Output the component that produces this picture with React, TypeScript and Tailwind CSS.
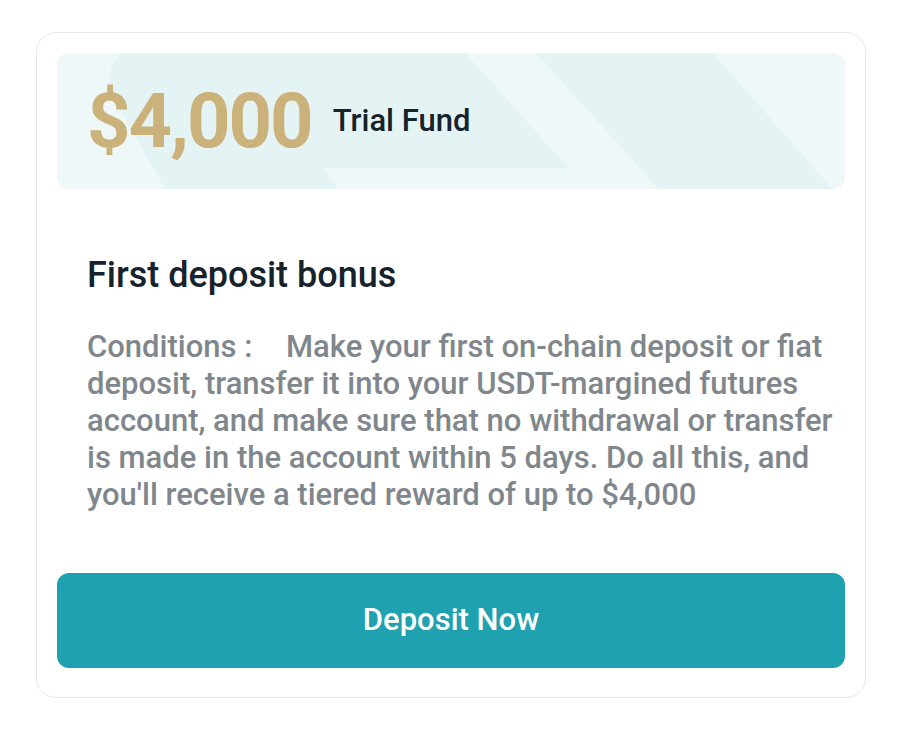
import React from "react";

// ── Fondo decorativo del banner ───────────────────────────────────────────────

function BannerBg() {
  return (
    <svg
      className="absolute inset-0 h-full w-full"
      viewBox="0 0 787 136"
      preserveAspectRatio="none"
      aria-hidden
    >
      <rect width="787" height="136" fill="#eef8f9" />
      <path
        d="M65 0 L408 0 L511 115 L265 115 L281 136 L108 136 L53 40 Q48 14 65 0 Z"
        fill="#e4f4f5"
      />
      <path d="M478 0 L655 0 L775 136 L601 136 Z" fill="#e4f4f5" />
    </svg>
  );
}

const lineas = [
  "deposit, transfer it into your USDT-margined futures",
  "account, and make sure that no withdrawal or transfer",
  "is made in the account within 5 days. Do all this, and",
  "you'll receive a tiered reward of up to $4,000",
];

export default function App() {
  return (
    <div
      className="min-h-[732px] bg-white pt-[32px] pl-[36px]"
      style={{ fontFamily: "Roboto, 'Noto Sans', sans-serif" }}
    >
      <div className="w-[830px] rounded-[20px] border border-[#e6e8ea] bg-white px-[20px] pt-[20px] pb-[29px]">
        {/* Banner */}
        <div className="relative h-[136px] overflow-hidden rounded-[12px]">
          <BannerBg />
          <div className="relative flex h-full items-center pl-[30px]">
            <span className="text-[76px] font-bold leading-none tracking-[-2px] text-[#cbb27a]">
              $4,000
            </span>
            <span className="ml-[21px] text-[31px] font-medium text-[#16222c]">
              Trial Fund
            </span>
          </div>
        </div>

        {/* Contenido */}
        <div className="pl-[30px] pt-[66px]">
          <h2 className="text-[36px] font-medium leading-[40px] text-[#16222c]">
            First deposit bonus
          </h2>
          <div className="mt-[33px] whitespace-nowrap text-[31px] font-medium leading-[37px] text-[#7f878c]">
            <div>
              <span className="inline-block w-[199px]">Conditions :</span>
              Make your first on-chain deposit or fiat
            </div>
            {lineas.map((l) => (
              <div key={l}>{l}</div>
            ))}
          </div>
        </div>

        <button className="mt-[60px] flex h-[95px] w-full items-center justify-center rounded-[12px] bg-[#1fa1b0] text-[31px] font-medium text-white">
          Deposit Now
        </button>
      </div>
    </div>
  );
}
